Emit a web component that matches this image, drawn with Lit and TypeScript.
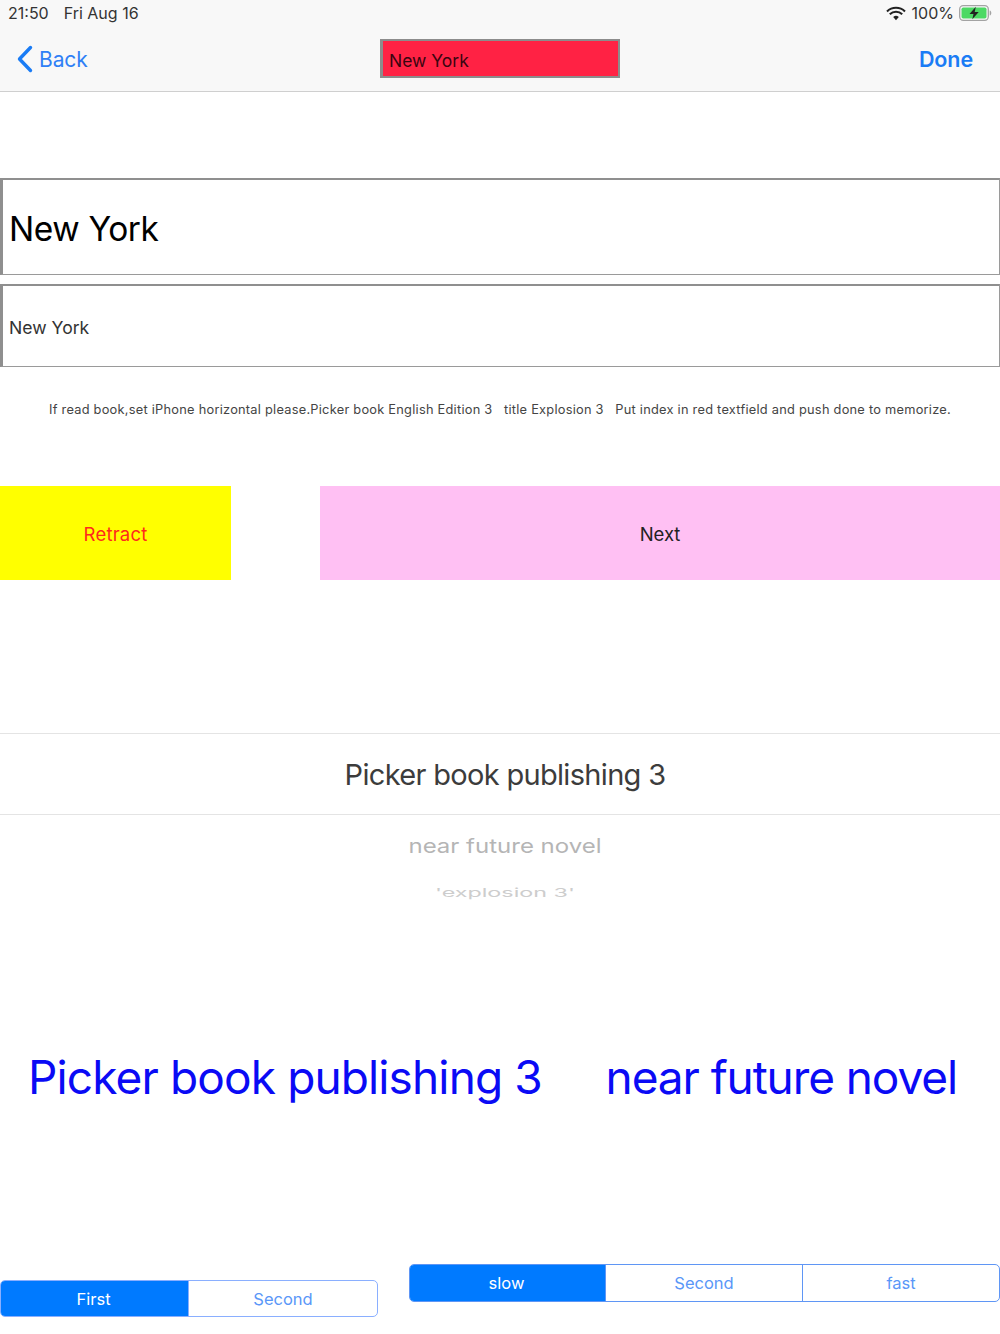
import { LitElement, html, css } from "lit";
import { customElement } from "lit/decorators.js";

@customElement("app-root")
export class AppRoot extends LitElement {
  static styles = css`
    :host {
      display: block;
      width: 1000px;
      height: 1334px;
      overflow: hidden;
      background: #fff;
      font-family: Inter, "Liberation Sans", sans-serif;
      color: #000;
    }
    .bar {
      height: 91px;
      background: #f8f8f8;
      border-bottom: 1px solid #cfcfcf;
      display: flex;
      flex-direction: column;
    }
    .status {
      height: 26px;
      padding: 0 8px;
      display: flex;
      align-items: center;
      justify-content: space-between;
      font-size: 16px;
      color: #333;
    }
    .status .left { display: flex; gap: 15px; }
    .status .right { display: flex; align-items: center; gap: 5px; }
    .status .right span { margin-left: 1px; }
    .nav {
      flex: 1;
      display: grid;
      grid-template-columns: 1fr 240px 1fr;
      align-items: start;
      padding: 0 16px;
    }
    .back, .done {
      display: flex;
      align-items: center;
      height: 38px;
      margin-top: 14px;
      font-size: 21px;
      color: #2f80f6;
      letter-spacing: -0.1px;
    }
    .back svg { margin-right: 6px; }
    .done {
      justify-self: end;
      margin-right: 11px;
      font-size: 21.5px;
      font-weight: 600;
      color: #1a7cf5;
    }
    .title-field {
      height: 39px;
      box-sizing: border-box;
      margin-top: 13px;
      border: 2px solid #8c8c8c;
      border-left-width: 3px;
      background: #ff2244;
      color: #3a0510;
      padding: 3px 6px 0;
      display: flex;
      align-items: center;
      font-size: 17.5px;
    }
    .field {
      box-sizing: border-box;
      border: 2px solid #8f8f8f;
      border-left-width: 3px;
      border-bottom: 1px solid #9a9a9a;
      border-right: 1px solid #9a9a9a;
      padding-left: 6px;
      display: flex;
      align-items: center;
    }
    .big {
      margin-top: 86px;
      height: 97px;
      padding-top: 4px;
      font-size: 33.5px;
      letter-spacing: -0.4px;
    }
    .small {
      margin-top: 9px;
      height: 83px;
      padding-top: 2px;
      font-size: 17.6px;
      color: #333;
    }
    .note {
      margin-top: 36px;
      height: 14px;
      line-height: 14px;
      text-align: center;
      font-size: 12.8px;
      letter-spacing: 0.25px;
      color: #444;
      white-space: pre;
    }
    .actions {
      margin-top: 69px;
      display: flex;
      justify-content: space-between;
      height: 94px;
    }
    .actions div {
      display: flex;
      align-items: center;
      justify-content: center;
      padding-top: 1px;
      box-sizing: border-box;
      font-size: 18.5px;
    }
    .retract { width: 231px; background: #ffff00; color: #ff2a1c; letter-spacing: 0.2px; }
    .next { width: 680px; background: #ffc0f3; color: #222; letter-spacing: -0.1px; }
    .picker {
      margin-top: 153px;
      height: 259px;
      display: flex;
      flex-direction: column;
      align-items: center;
    }
    .selected {
      align-self: stretch;
      height: 80px;
      border-top: 1px solid #e4e4e4;
      border-bottom: 1px solid #e4e4e4;
      display: flex;
      align-items: center;
      justify-content: center;
      padding-left: 10px;
      font-size: 29px;
      letter-spacing: -0.68px;
      color: #3c3c3c;
    }
    .row1 {
      margin-top: 17px;
      margin-left: 10px;
      font-size: 24px;
      line-height: 28px;
      color: #b5b5b5;
      transform: scaleY(0.82);
    }
    .row2 {
      margin-top: 25px;
      margin-left: 10px;
      font-size: 23.300px;
      line-height: 16px;
      color: #cdcdcd;
      transform: scaleY(0.5);
    }
    .labels {
      margin-top: 55px;
      height: 60px;
      display: flex;
      align-items: center;
      justify-content: space-between;
      padding: 0 43px 0 28px;
      font-size: 46px;
      letter-spacing: -0.87px;
      color: #0a0af5;
      white-space: nowrap;
    }
    .labels span:last-child { letter-spacing: -1.1px; }
    .segments {
      margin-top: 157px;
      display: flex;
      justify-content: space-between;
      align-items: flex-start;
    }
    .seg {
      box-sizing: border-box;
      display: flex;
      border: 1px solid #5f96f5;
      border-radius: 5px;
      overflow: hidden;
      font-size: 16.5px;
      color: #5a97f8;
    }
    .seg div {
      flex: 1;
      display: flex;
      align-items: center;
      justify-content: center;
      border-left: 1px solid #5f96f5;
    }
    .seg div:first-child { border-left: 0; }
    .seg .on { background: #007aff; color: #fff; box-sizing: border-box; padding-right: 2px; }
    .seg-left { width: 378px; height: 37px; margin-top: 16px; border-color: #8aafff; }
    .seg-left div { border-left-color: #8aafff; }
    .seg-left .on { flex: 0 0 187px; }
    .seg-right { width: 591px; height: 38px; }
    .seg-right .on { flex: 0 0 195px; }
  `;

  render() {
    return html`
      <div class="bar">
        <div class="status">
          <div class="left"><span>21:50</span><span>Fri Aug 16</span></div>
          <div class="right">
            <svg width="20" height="15" viewBox="0 0 20 15">
              <path d="M10 14.2 7.2 11a4 4 0 0 1 5.6 0z" fill="#222" />
              <path d="M1 5.4a13 13 0 0 1 18 0M3.8 8.2a9 9 0 0 1 12.4 0" fill="none" stroke="#222" stroke-width="2.1" />
            </svg>
            <span>100%</span>
            <svg width="33" height="16" viewBox="0 0 33 16">
              <rect x="0.7" y="0.7" width="28.6" height="14.6" rx="3.5" fill="none" stroke="#a3a3a3" stroke-width="1.3" />
              <rect x="2.5" y="2.5" width="25" height="11" rx="1.8" fill="#4cd964" />
              <path d="M30.7 5.5c1.2.3 1.6 1.300 1.600 2.500s-.4 2.200-1.600 2.500z" fill="#a3a3a3" />
              <path d="M16.800 1.800 10.500 9h4l-1.200 5.200L19.700 7h-4z" fill="#222" />
            </svg>
          </div>
        </div>
        <div class="nav">
          <div class="back">
            <svg width="17" height="28" viewBox="0 0 17 28">
              <path d="M14.500 2.500 3.500 14l11 11.500" fill="none" stroke="#1a7cf5" stroke-width="3.400" stroke-linecap="round" stroke-linejoin="round" />
            </svg>
            Back
          </div>
          <div class="title-field">New York</div>
          <div class="done">Done</div>
        </div>
      </div>
      <div class="field big">New York</div>
      <div class="field small">New York</div>
      <div class="note">If read book,set iPhone horizontal please.Picker book English Edition 3   title Explosion 3   Put index in red textfield and push done to memorize.</div>
      <div class="actions">
        <div class="retract">Retract</div>
        <div class="next">Next</div>
      </div>
      <div class="picker">
        <div class="selected">Picker book publishing 3</div>
        <div class="row1">near future novel</div>
        <div class="row2">'explosion 3'</div>
      </div>
      <div class="labels">
        <span>Picker book publishing 3</span>
        <span>near future novel</span>
      </div>
      <div class="segments">
        <div class="seg seg-left">
          <div class="on">First</div>
          <div>Second</div>
        </div>
        <div class="seg seg-right">
          <div class="on">slow</div>
          <div>Second</div>
          <div>fast</div>
        </div>
      </div>
    `;
  }
}
